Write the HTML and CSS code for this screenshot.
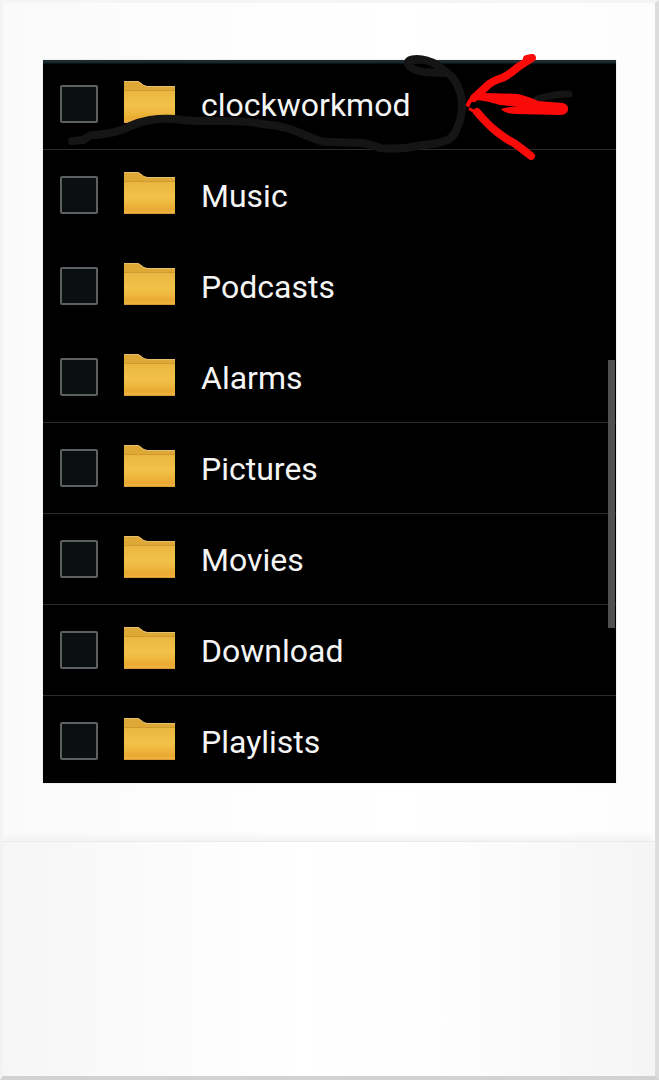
FILE: index.html
```html
<!DOCTYPE html>
<html lang="en">
<head>
    <meta charset="UTF-8">
    <meta name="viewport" content="width=device-width, initial-scale=1.0">
    <title>Folders</title>
    <link rel="stylesheet" href="styles.css">
</head>
<body>
    <!-- shared folder icon -->
    <svg class="defs" width="0" height="0" aria-hidden="true">
        <defs>
            <linearGradient id="folder-front" x1="0" y1="0" x2="0" y2="1">
                <stop offset="0" stop-color="#e9b740"/>
                <stop offset="0.45" stop-color="#f2c14a"/>
                <stop offset="0.65" stop-color="#efb93f"/>
                <stop offset="0.85" stop-color="#eaa932"/>
                <stop offset="1" stop-color="#efb543"/>
            </linearGradient>
            <symbol id="folder" viewBox="0 0 51 42">
                <path d="M0 0H13Q15 0 17 2Q20 5 23 5H51V42H0Z" fill="#dea836"/>
                <path d="M0 10H51V42H0Z" fill="url(#folder-front)"/>
                <path d="M0 .5H13Q15 .5 17 2.5Q20 5.5 23 5.5H51" fill="none" stroke="#e6bf6c"/>
                <path d="M0 9.5H51" stroke="#d09a2e"/>
                <path d="M0 41.5H51" stroke="#d99a35"/>
            </symbol>
        </defs>
    </svg>

    <main class="polaroid">
        <div class="photo">
            <div class="screen">
                <ul class="folder-list">
                    <li class="folder-row">
                        <input type="checkbox" id="clockworkmod">
                        <svg class="folder-icon" aria-hidden="true"><use href="#folder"/></svg>
                        <label for="clockworkmod">clockworkmod</label>
                    </li>
                    <li class="folder-row no-line">
                        <input type="checkbox" id="music">
                        <svg class="folder-icon" aria-hidden="true"><use href="#folder"/></svg>
                        <label for="music">Music</label>
                    </li>
                    <li class="folder-row no-line">
                        <input type="checkbox" id="podcasts">
                        <svg class="folder-icon" aria-hidden="true"><use href="#folder"/></svg>
                        <label for="podcasts">Podcasts</label>
                    </li>
                    <li class="folder-row">
                        <input type="checkbox" id="alarms">
                        <svg class="folder-icon" aria-hidden="true"><use href="#folder"/></svg>
                        <label for="alarms">Alarms</label>
                    </li>
                    <li class="folder-row">
                        <input type="checkbox" id="pictures">
                        <svg class="folder-icon" aria-hidden="true"><use href="#folder"/></svg>
                        <label for="pictures">Pictures</label>
                    </li>
                    <li class="folder-row">
                        <input type="checkbox" id="movies">
                        <svg class="folder-icon" aria-hidden="true"><use href="#folder"/></svg>
                        <label for="movies">Movies</label>
                    </li>
                    <li class="folder-row">
                        <input type="checkbox" id="download">
                        <svg class="folder-icon" aria-hidden="true"><use href="#folder"/></svg>
                        <label for="download">Download</label>
                    </li>
                    <li class="folder-row">
                        <input type="checkbox" id="playlists">
                        <svg class="folder-icon" aria-hidden="true"><use href="#folder"/></svg>
                        <label for="playlists">Playlists</label>
                    </li>
                </ul>
                <div class="scrollbar"></div>
            </div>
            <!-- pen marks around the first folder -->
            <svg class="pen-marks" viewBox="0 0 573 110" aria-hidden="true">
                <g fill="none" stroke="#151515" stroke-width="8" stroke-linecap="round" stroke-linejoin="round">
                    <path d="M29 81L40 80L48 75Q56 75 67 73Q78 71 87 66Q96 62 107 60Q119 58 132 59Q144 61 154 61H187Q206 61 220 64Q234 65 247 69L272 79Q278 82 286 82L320 83Q330 85 337 88Q358 90 380 85Q393 84 402 81Q411 78 414 68Q419 58 419 46Q419 35 415 27Q412 19 407 15L394 5Q384 -1 374 -1Q364 -1 365 4Q368 10 380 12L400 13"/>
                    <path d="M494 39Q510 34 526 34" stroke-width="7"/>
                </g>
                <g fill="none" stroke="#fb0a0a" stroke-linecap="round" stroke-linejoin="round">
                    <path d="M484 -1L489 -2L475 7Q466 15 459 18Q449 21 444 26L431 38" stroke-width="8"/>
                    <path d="M433 36Q426 40 425 45" stroke-width="4"/>
                    <path d="M427 49L435 54" stroke-width="3"/>
                    <path d="M434 52Q445 65 454 72Q463 79 471 83Q478 88 488 96" stroke-width="8"/>
                </g>
                <path d="M424 44L436 33Q456 33 475 34Q487 37 495 41L520 43Q526 45 525 50Q524 55 517 55L474 54Q462 54 458 49Q465 46 477 47Q469 46 457 45Q445 41 434 40Z" fill="#fb0a0a"/>
            </svg>
        </div>
        <div class="caption"></div>
    </main>
</body>
</html>
```

FILE: styles.css
```css
* {
    box-sizing: border-box;
}
body {
    margin: 0;
    background-color: #fcfcfc;
    font-family: Roboto, "Liberation Sans", sans-serif;
}
.defs {
    position: absolute;
}
.polaroid {
    display: flex;
    flex-direction: column;
    min-height: 100vh;
    border-top: 3px solid #f5f5f5;
    border-left: 3px solid #f3f3f3;
    border-right: 4px solid #dcdcdc;
    border-bottom: 4px solid #d2d2d2;
    background: linear-gradient(to right, #fafafa, #fdfdfd 30%, #ffffff 60%, #fdfdfd);
}
.photo {
    position: relative;
    margin: 57px 39px 58px 40px;
}
.screen {
    position: relative;
    overflow: hidden;
    background: linear-gradient(to bottom, #1f2e31, #16252a 3px, #000000 4px);
    box-shadow: 0 0 2px #d5dcdc;
}
.folder-list {
    list-style: none;
    margin: -1px 0 -4px;
    padding: 0;
}
.folder-row {
    display: flex;
    align-items: center;
    gap: 26px;
    height: 91px;
    padding-left: 17px;
    border-bottom: 1px solid #2b2b2b;
}
.folder-row.no-line {
    border-bottom-color: transparent;
}
.folder-row input {
    appearance: none;
    width: 38px;
    height: 38px;
    margin: 0;
    border: 2px solid #5d6062;
    border-radius: 2px;
    background-color: #0b0f10;
}
.folder-icon {
    width: 51px;
    height: 42px;
    margin-bottom: 4px;
}
/* the pen line cuts off the foot of the first folder */
.folder-row:first-child .folder-icon {
    clip-path: polygon(0 0, 100% 0, 100% 90%, 40% 90%, 10% 100%, 0 100%);
}
.folder-row label {
    color: #f5f5f5;
    font-size: 32px;
    line-height: 40px;
    padding-top: 2px;
}
.scrollbar {
    position: absolute;
    top: 300px;
    right: 1px;
    width: 7px;
    height: 268px;
    background-color: #505050;
}
.pen-marks {
    position: absolute;
    top: 0;
    left: 0;
    width: 100%;
    overflow: visible;
    pointer-events: none;
}
.caption {
    flex: 1;
    border-top: 1px solid #ebebeb;
    background: linear-gradient(to right, #f6f6f6, #fafafa 20%, #ffffff 45%, #fefefe 65%, #f5f5f5);
    box-shadow: 0 -6px 6px -2px #f2f2f2;
}
```
